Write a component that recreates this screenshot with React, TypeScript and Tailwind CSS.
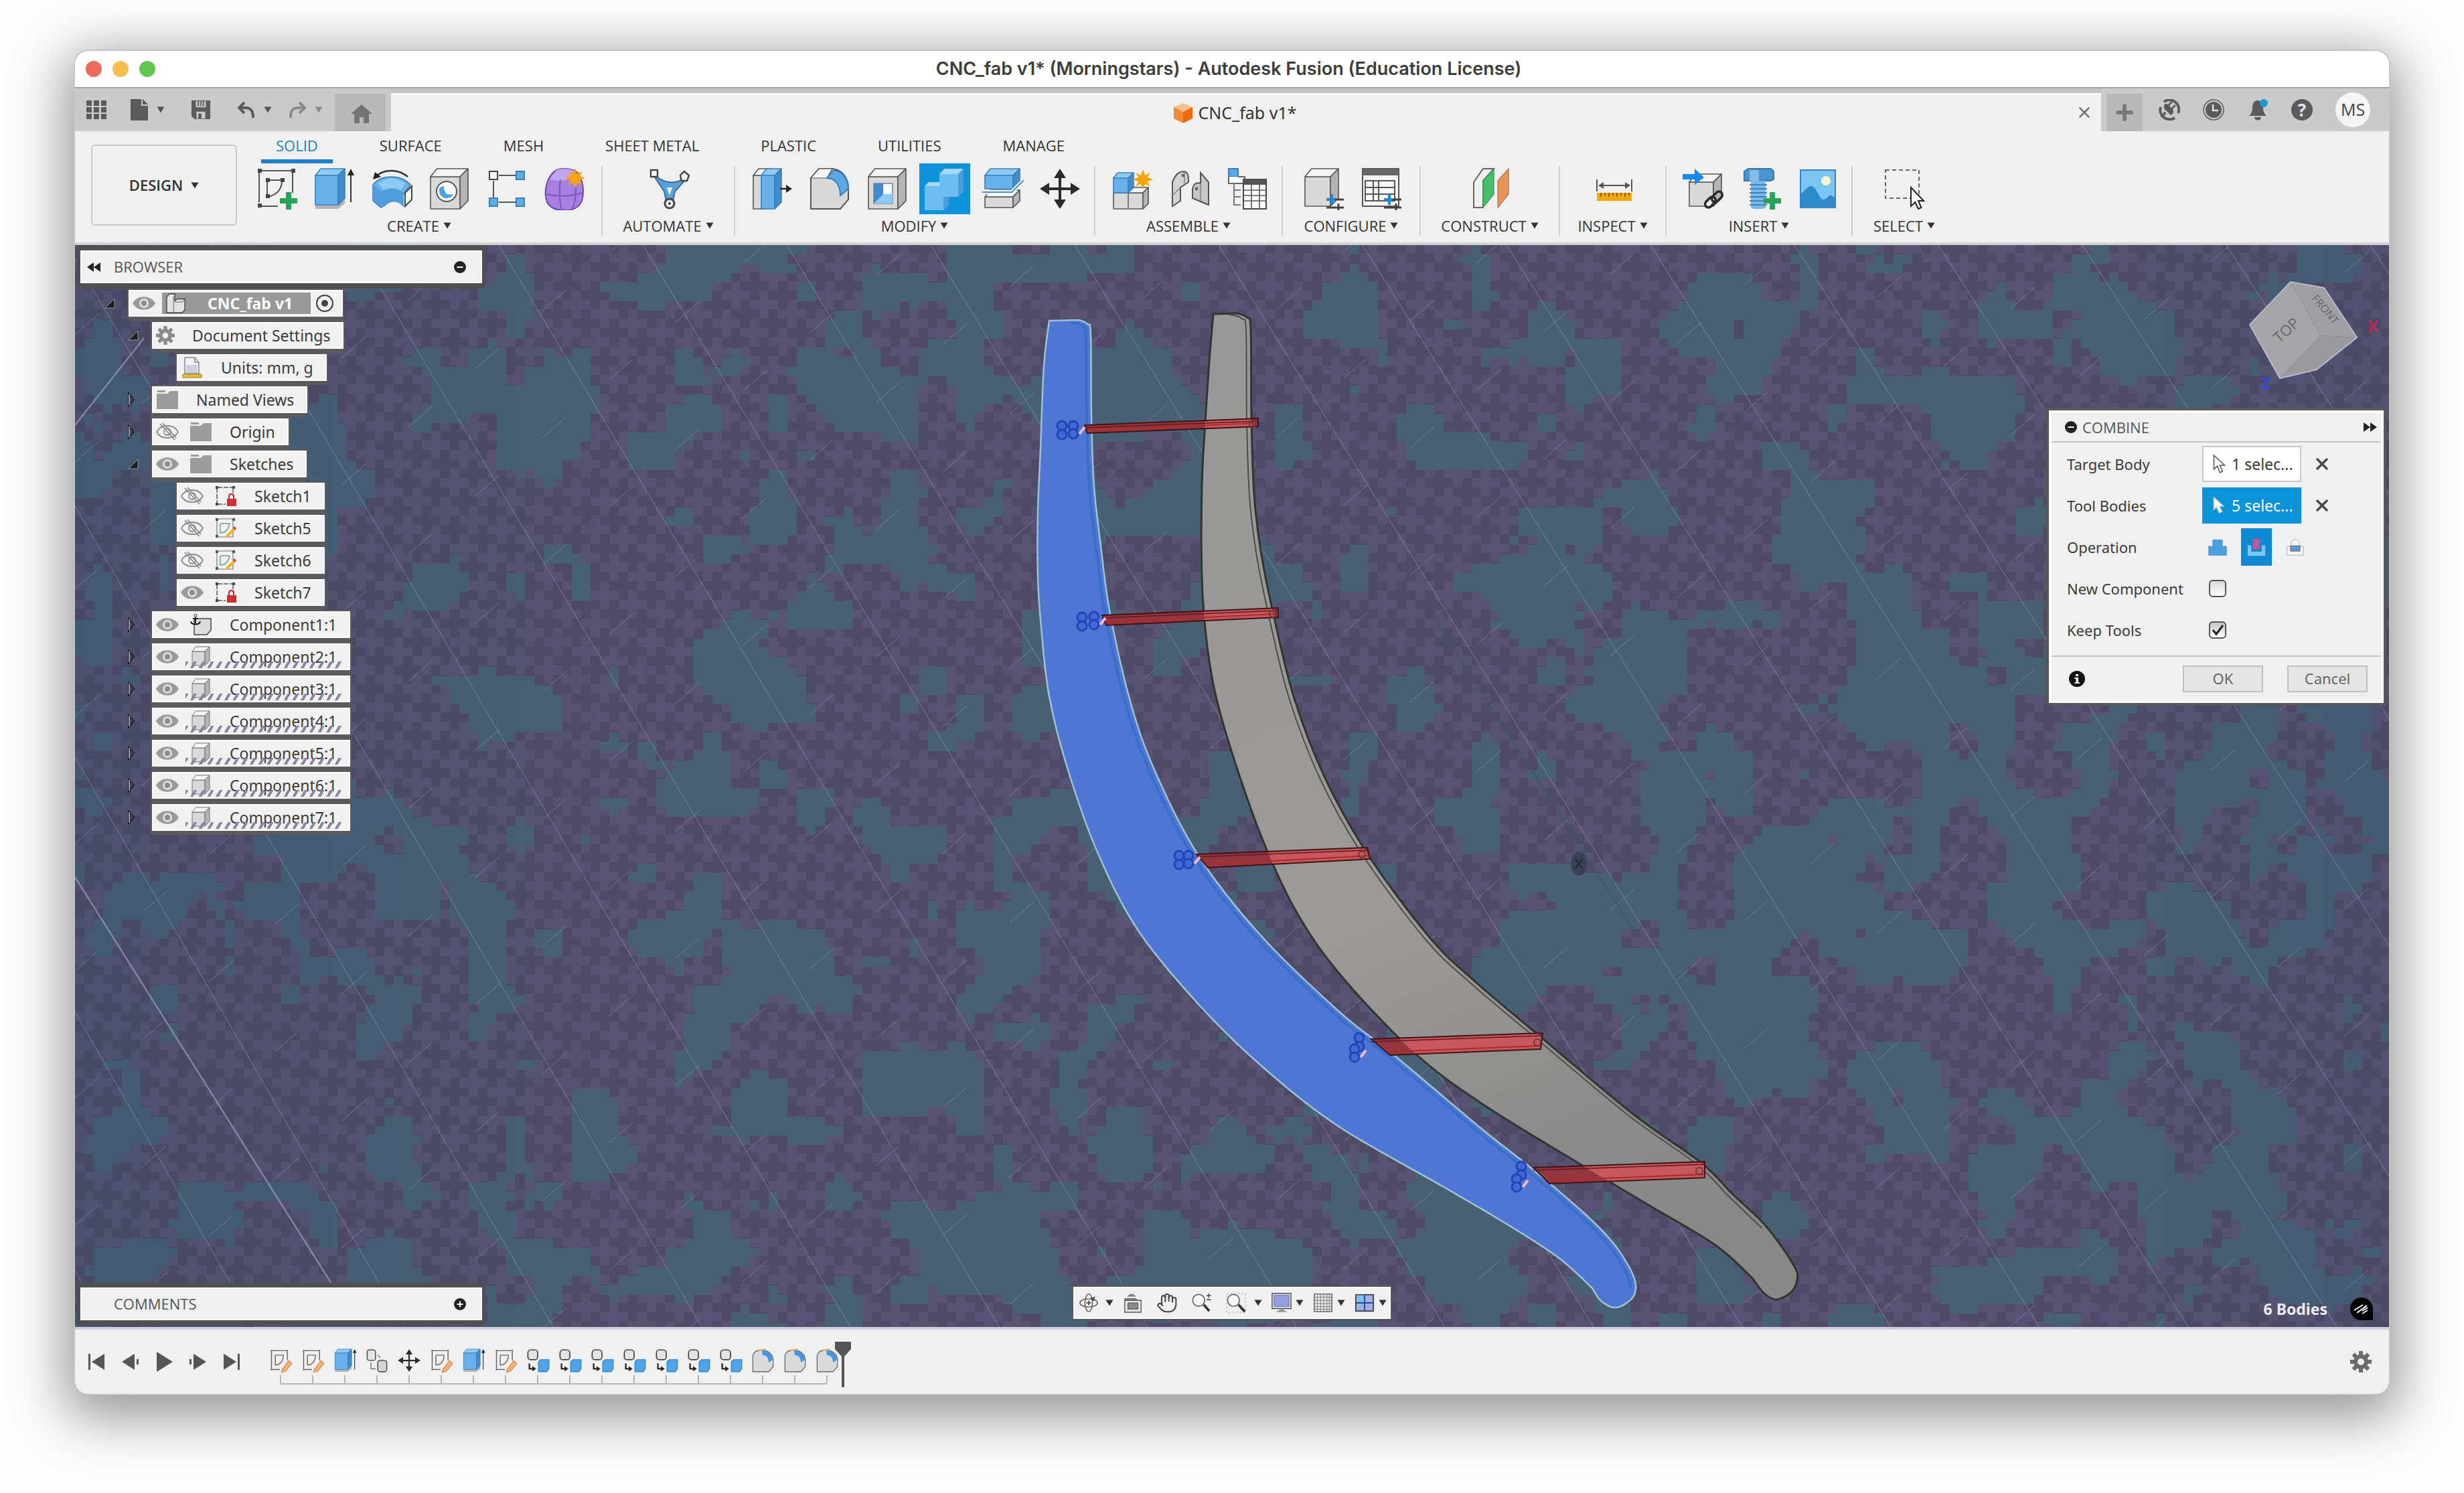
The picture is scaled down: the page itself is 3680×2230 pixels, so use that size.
import { useId } from "react";
import type { ReactNode } from "react";
import { Plus, X, Hand } from "lucide-react";

type Point = [number, number];

/* ---------- shared bits ---------- */

function Caret({ className = "text-[#333]" }: { className?: string }) {
  return (
    <svg viewBox="0 0 12 10" className={`h-[10px] w-3 shrink-0 ${className}`} aria-hidden="true">
      <path d="M0.5 0.5h11L6 9.5z" fill="currentColor" />
    </svg>
  );
}

function Glyph({ children, className = "h-16 w-16" }: { children: ReactNode; className?: string }) {
  return (
    <svg viewBox="0 0 32 32" className={`shrink-0 ${className}`} fill="none" aria-hidden="true">
      {children}
    </svg>
  );
}

type Tone = "blue" | "grey";

// block with a chamfered right side, the base of most modelling icons
function Block({ x = 2, y = 1, w = 28, h = 30, d = 6, tone = "grey" as Tone }) {
  const blue = tone === "blue";
  const line = blue ? "#3b7fbd" : "#555";
  return (
    <g stroke={line} strokeWidth={0.8} strokeLinejoin="round">
      <path d={`M${x} ${y + d}h${w - d}v${h - d}h-${w - d}z`} fill={blue ? "#67b0ea" : "#d9d9d9"} />
      <path d={`M${x} ${y + d}l${d * 0.8} -${d}h${w - d * 0.8}l-${d} ${d}z`} fill={blue ? "#8fcaf5" : "#f4f4f4"} />
      <path d={`M${x + w - d} ${y + d}l${d} -${d}v${h - d}l-${d} ${d}z`} fill={blue ? "#3f8bcb" : "#b4b4b4"} />
    </g>
  );
}

function Star({ x, y }: { x: number; y: number }) {
  return (
    <path
      transform={`translate(${x} ${y})`}
      d="M0-7.5 1.6-3 5.4-5 3.4-1.5 7.5 0 3.4 1.6 5.4 5.2 1.6 3.4 0 7.5-1.6 3.4-5.4 5.2-3.4 1.6-7.5 0-3.4-1.5-5.4-5-1.6-3z"
      fill="#f7a408"
    />
  );
}

function Cross({ x, y }: { x: number; y: number }) {
  return <path d={`M${x} ${y - 6.5}v13M${x - 6.5} ${y}h13`} stroke="#27a35b" strokeWidth={4} />;
}

function MoveArrows() {
  return (
    <g fill="#2b2b2b">
      <path d="M15 7h2v18h-2zM7 15h18v2H7z" />
      <path d="M16 1l4.5 7h-9zM16 31l4.5-7h-9zM1 16l7-4.5v9zM31 16l-7-4.5v9z" />
    </g>
  );
}

/* ---------- ribbon icons ---------- */

const icons: Record<string, ReactNode> = {
  sketch: (
    <Glyph>
      <path d="M4 2.500h23M3 4v22M28 4v15M4 29h13M10 9.500h10M9 11v9M20 10c0 6-3 10-10 12" stroke="#555" />
      <path d="M2 1h3v3H2zM27 1h3v3h-3zM2 27h3v3H2zM8 8h3v3H8zM19 8h3v3h-3zM8 20h3v3H8z" fill="#444" />
      <Cross x={25} y={25} />
    </Glyph>
  ),
  extrude: (
    <Glyph>
      <path d="M2 27h17l5-4v4l-5 4H2z" fill="#b5b5b5" />
      <Block x={2} y={1} w={22} h={27} d={5} tone="blue" />
      <path d="M28.500 26V4" stroke="#333" />
      <path d="M28.500 1l2.500 5h-5z" fill="#222" />
    </Glyph>
  ),
  revolve: (
    <Glyph>
      <path d="M2 13c6-8 21-8 28 0l-5 7c-4-4-12-3-14 6l-3 4-6-5z" fill="#67b0ea" stroke="#3b7fbd" strokeWidth={0.8} />
      <path d="M2 13l7 5c2-2 12-4 16 2v10c-3-5-10-6-14-1l-2 1-7-5z" fill="#4f9edb" />
      <path d="M6 12c6-5 14-5 20 0l-3 5c-4-2-10-2-13 0z" fill="#8fcaf5" />
      <path d="M26 19l5-5v10l-5 5z" fill="#f5f5f5" stroke="#444" />
      <path d="M4 7c6-6 17-6 24 0" stroke="#333" strokeWidth={1.2} />
      <path d="M2 9l1.500-5.500L8 7z" fill="#222" />
    </Glyph>
  ),
  hole: (
    <Glyph>
      <Block />
      <circle cx={14} cy={18} r={7.5} fill="#f8f8f8" stroke="#555" />
      <path d="M9 15a5.500 5.500 0 1 0 10 5c-5 1-7-1-7-6z" fill="#4fa3e3" />
    </Glyph>
  ),
  pattern: (
    <Glyph>
      <path d="M10 6h13M6 10v13M10 26h13" stroke="#555" />
      <path d="M3 3h6v6H3z" fill="#fff" stroke="#444" />
      <path d="M23 3h6v6h-6zM3 23h6v6H3zM23 23h6v6h-6z" fill="#5aaeea" stroke="#3b7fbd" />
    </Glyph>
  ),
  form: (
    <Glyph>
      <path d="M10 2c5-2 12-1 16 2 4 6 5 14 3 21-2 5-6 7-12 7-7 0-11-1-14-6-3-8 0-20 7-24z" fill="#a67fe0" stroke="#6d46b0" />
      <path d="M10 2c5-2 12-1 15 2-3 6-12 7-20 5z" fill="#c3a6ef" />
      <path d="M2 20c8 2 19 2 27-1M13 9c-1 7-1 15 1 23M23 8c2 6 2 16-1 23" stroke="#7d55c4" />
      <Star x={24} y={8} />
    </Glyph>
  ),
  automate: (
    <Glyph>
      <path d="M5 4c2 8 20 10 22 2l2 2-9 10-2 10h-4l-2-10-8-12z" fill="#5a9fd6" stroke="#3c6f9c" />
      <path d="M14 15h4l-2 6z" fill="#f0f0f0" />
      <circle cx={16} cy={27} r={3.5} fill="#eee" stroke="#444" strokeWidth={1.5} />
      <circle cx={16} cy={27} r={1} fill="#444" />
      <path d="M2 2h5v5H2zM27 3l3.500 3-1.500 4h-4l-1-4z" fill="#fff" stroke="#444" strokeWidth={1.2} />
    </Glyph>
  ),
  pressPull: (
    <Glyph>
      <Block x={2} y={1} w={14} h={30} d={5} />
      <Block x={8} y={1} w={15} h={30} d={5} tone="blue" />
      <path d="M22 16h6" stroke="#222" strokeWidth={1.2} />
      <path d="M31 16l-4.500-3v6z" fill="#222" />
    </Glyph>
  ),
  fillet: (
    <Glyph>
      <path d="M2 8l6-7h10c8 1 12 7 12 15v8l-6 7H2z" fill="#d9d9d9" stroke="#555" />
      <path d="M2 8l6-7h10l-4 7z" fill="#f5f5f5" stroke="#555" strokeWidth={0.6} />
      <path d="M14 8l5-6c7 1 11 7 11 14l-6 5c0-8-4-13-10-13z" fill="#5aa9e6" stroke="#3b7fbd" />
    </Glyph>
  ),
  shell: (
    <Glyph>
      <Block />
      <path d="M6 12h14v15H6z" fill="#f5fafd" stroke="#999" />
      <path d="M6 12h7v9l-7 6z" fill="#3f8bcb" />
      <path d="M13 20h7v7H6z" fill="#8fcaf5" />
    </Glyph>
  ),
  combine: (
    <Glyph>
      <path d="M1 14l3-3h8V5l4-4h14v17l-4 4h-7v6l-4 4H1z" fill="#6fbcf3" />
      <path d="M12 5l4-4h14l-4 4zM1 14l3-3h8v3z" fill="#a4d8fb" />
      <path d="M26 5l4-4v17l-4 4zM15 32l4-4v-6h-4z" fill="#479cdc" />
    </Glyph>
  ),
  split: (
    <Glyph>
      <Block x={3} y={17} w={26} h={13} d={5} />
      <Block x={3} y={1} w={26} h={15} d={5} tone="blue" />
      <path d="M1 18.500h22l9-9" stroke="#fff" strokeWidth={3} />
      <path d="M1 18.500h22l9-9" stroke="#3b8fd6" strokeWidth={1} />
    </Glyph>
  ),
  move: (
    <Glyph>
      <MoveArrows />
    </Glyph>
  ),
  newComponent: (
    <Glyph>
      <Block x={2} y={15} w={26} h={16} d={4} />
      <path d="M13 19v12" stroke="#666" strokeWidth={0.8} />
      <Block x={2} y={4} w={15} h={15} d={4} tone="blue" />
      <Star x={24} y={9} />
    </Glyph>
  ),
  joint: (
    <Glyph>
      <path d="M3 11c2-5 4-8 9-8 3 1 3 4 3 8l-6 4v10l-6 4z" fill="#d2d2d2" stroke="#555" />
      <path d="M9 15l-6 6M12 3v9" stroke="#888" strokeWidth={0.8} />
      <path d="M30 28l-12-5v-7c1-4 3-5 6-4V4l6 7z" fill="#c6c6c6" stroke="#555" />
      <path d="M24 12v13" stroke="#888" strokeWidth={0.8} />
      <circle cx={11} cy={6} r={1.2} fill="#666" />
      <circle cx={21} cy={16} r={1.2} fill="#666" />
    </Glyph>
  ),
  bom: (
    <Glyph>
      <path d="M2 1h7v6H2z" fill="#5aa9e6" stroke="#3b7fbd" />
      <path d="M9 7h5v5H2V7" fill="#fff" stroke="#666" />
      <path d="M6 12v16h5M6 17h5M6 22h5" stroke="#777" />
      <path d="M13 9h17v22H13z" fill="#fff" stroke="#444" />
      <path d="M13 9h17v4H13z" fill="#555" />
      <path d="M13 17h17M13 21h17M13 25h17M19 13v18M25 13v18" stroke="#555" strokeWidth={0.8} />
    </Glyph>
  ),
  configure: (
    <Glyph>
      <Block x={2} y={1} w={25} h={28} d={6} />
      <path d="M18 24h13M18 30h13" stroke="#444" strokeWidth={1.5} />
      <path d="M22 20v8M18 24h6" stroke="#1f86d8" strokeWidth={2} />
      <path d="M27 27v5" stroke="#444" strokeWidth={1.5} />
    </Glyph>
  ),
  configTable: (
    <Glyph>
      <path d="M2 1h27v28H2z" fill="#f7f7f7" stroke="#555" />
      <path d="M2 1h27v5H2z" fill="#666" />
      <path d="M4 10h22v15H4zM4 15h22M4 20h22M10 10v15M14 10v15" stroke="#555" />
      <path d="M18 24h13M18 30h13" stroke="#444" strokeWidth={1.5} />
      <path d="M22 20v8M18 24h6" stroke="#1f86d8" strokeWidth={2} />
      <path d="M27 27v5" stroke="#444" strokeWidth={1.5} />
    </Glyph>
  ),
  construct: (
    <Glyph>
      <path d="M3 11l7-10h8l-8 9v20H3z" fill="#efefef" stroke="#666" />
      <path d="M10 10l8-9v19l-8 10z" fill="#45c069" stroke="#2f9a50" strokeWidth={0.6} />
      <path d="M21 10l8-9v19l-8 10z" fill="#e8935a" stroke="#a9714a" strokeWidth={0.6} />
    </Glyph>
  ),
  measure: (
    <Glyph>
      <path d="M3 9v9M29 9v9M5 13.500h22" stroke="#555" />
      <path d="M4 13.500l4-2.500v5zM28 13.500l-4-2.500v5z" fill="#555" />
      <path d="M3 19h26v6H3z" fill="#f4a70d" />
      <path d="M6 19v3M9 19v2M12 19v3M15 19v2M18 19v3M21 19v2M24 19v3M27 19v2" stroke="#6b4a00" strokeWidth={0.8} />
    </Glyph>
  ),
  derive: (
    <Glyph>
      <Block x={6} y={5} w={24} h={24} d={6} />
      <path d="M1 5h9V1l7 6.500L10 13V9H1z" fill="#1489f2" />
      <rect x={17} y={24} width={9} height={5} rx={2.5} transform="rotate(-45 21 26)" stroke="#2b2b2b" strokeWidth={1.8} fill="#eee" />
      <rect x={22} y={20} width={9} height={5} rx={2.5} transform="rotate(-45 26 22)" stroke="#2b2b2b" strokeWidth={1.8} />
    </Glyph>
  ),
  bolt: (
    <Glyph>
      <path d="M4 3l3-2h17l2 2v6l-2 1H4z" fill="#4c95cf" stroke="#3a78ab" />
      <path d="M8 2h7v8H8z" fill="#82bbe6" />
      <path d="M9 10h11v20l-2 1h-7l-2-1z" fill="#79b8e8" />
      <path d="M8 13h13M8 16h13M8 19h13M8 22h13M8 25h13M8 28h13" stroke="#3f82b8" />
      <Cross x={25} y={25} />
    </Glyph>
  ),
  picture: (
    <Glyph>
      <path d="M3 2h26v28H3z" fill="#7cc6f6" stroke="#3b7fbd" />
      <circle cx={22} cy={10} r={3.5} fill="#fff5d0" />
      <path d="M3 20c3-2 5-6 8-6 4 0 6 10 9 10 3 0 4-4 6-3l3 2v7H3z" fill="#2f8ac9" />
    </Glyph>
  ),
  select: (
    <Glyph>
      <path d="M1 2h25v21H1z" stroke="#666" strokeDasharray="3 2" />
      <path d="M20 15v14l3.200-3 2.300 5 2.200-1-2.200-5h4z" fill="#fff" stroke="#222" />
    </Glyph>
  ),
};

const ribbonGroups = [
  { label: "CREATE", width: "w-[546px]", tools: ["sketch", "extrude", "revolve", "hole", "pattern", "form"] },
  { label: "AUTOMATE", width: "w-[198px]", tools: ["automate"] },
  { label: "MODIFY", width: "w-[538px]", tools: ["pressPull", "fillet", "shell", "combine", "split", "move"] },
  { label: "ASSEMBLE", width: "w-[280px]", tools: ["newComponent", "joint", "bom"] },
  { label: "CONFIGURE", width: "w-[206px]", tools: ["configure", "configTable"] },
  { label: "CONSTRUCT", width: "w-[208px]", tools: ["construct"] },
  { label: "INSPECT", width: "w-[159px]", tools: ["measure"] },
  { label: "INSERT", width: "w-[278px]", tools: ["derive", "bolt", "picture"] },
  { label: "SELECT", width: "w-[154px]", tools: ["select"] },
];

const ribbonTabs = ["SOLID", "SURFACE", "MESH", "SHEET METAL", "PLASTIC", "UTILITIES", "MANAGE"];

/* ---------- window chrome ---------- */

function TitleBar() {
  return (
    <header className="flex h-14 shrink-0 items-center border-b-2 border-[#a5a5a5] bg-white px-4">
      <div className="flex gap-4">
        <button aria-label="Close" className="h-6 w-6 rounded-full bg-[#ed6a5f]" />
        <button aria-label="Minimize" className="h-6 w-6 rounded-full bg-[#f5bf4f]" />
        <button aria-label="Zoom" className="h-6 w-6 rounded-full bg-[#61c554]" />
      </div>
      <h1 className="flex-1 pr-[114px] text-center font-['Inter',sans-serif] text-[27px] font-semibold text-[#3d3d3d]">
        CNC_fab v1* (Morningstars) - Autodesk Fusion (Education License)
      </h1>
    </header>
  );
}

function DocumentBar() {
  return (
    <div className="flex h-16 shrink-0 bg-[#cacaca] text-[#5b5b5b]">
      <div className="flex w-[388px] items-center pl-4">
        <button aria-label="Data panel" className="w-[66px]">
          <svg viewBox="0 0 32 32" className="h-8 w-8" fill="currentColor" aria-hidden="true">
            <path d="M1 2h8v8H1zM12 2h8v8h-8zM23 2h8v8h-8zM1 12h8v8H1zM12 12h8v8h-8zM23 12h8v8h-8zM1 22h8v8H1zM12 22h8v8h-8zM23 22h8v8h-8z" />
          </svg>
        </button>
        <button aria-label="File" className="flex w-[82px] items-center gap-3">
          <svg viewBox="0 0 28 34" className="h-[34px] w-7" fill="currentColor" aria-hidden="true">
            <path d="M1 1h16v10h10v22H1zM19 1l8 8h-8z" />
          </svg>
          <Caret className="text-[#555]" />
        </button>
        <button aria-label="Save" className="w-[74px] pl-[9px]">
          <svg viewBox="0 0 32 32" className="h-8 w-[30px]" aria-hidden="true">
            <path d="M1 1h30v30H6l-5-5z" fill="#5b5b5b" />
            <path d="M8 2h16v10H8zM9 19h14v11H9z" fill="#cacaca" />
            <path d="M11 2h2v8h-2zM15 2h2v8h-2zM19 2h2v8h-2zM12 22h5v8h-5z" fill="#5b5b5b" />
          </svg>
        </button>
        <button aria-label="Undo" className="flex w-[78px] items-center gap-3 pl-1">
          <svg viewBox="0 0 28 26" className="h-[26px] w-7" fill="none" stroke="currentColor" strokeWidth={4} aria-hidden="true">
            <path d="M11 2L3 10l8 8M4 10h9c8 0 11 5 11 15" />
          </svg>
          <Caret className="text-[#555]" />
        </button>
        <button aria-label="Redo" className="flex items-center gap-3 pl-0.5 text-[#8a8a8a]">
          <svg viewBox="0 0 28 26" className="h-[26px] w-7" fill="none" stroke="currentColor" strokeWidth={4} aria-hidden="true">
            <path d="M17 2l8 8-8 8M24 10h-9C7 10 4 15 4 25" />
          </svg>
          <Caret className="text-[#8a8a8a]" />
        </button>
      </div>
      <div className="flex w-[84px] pr-2 pt-2">
        <button aria-label="Home" className="flex flex-1 items-center justify-center bg-[#b9b9b9] pl-1 text-[#737373]">
          <svg viewBox="0 0 32 28" className="mt-1 h-7 w-8" fill="currentColor" aria-hidden="true">
            <path d="M16 0l16 14h-5v14h-8v-9h-6v9H5V14H0z" />
          </svg>
        </button>
      </div>
      <div className="flex flex-1 items-center bg-[#f0f0f0] shadow-[inset_0_7px_0_#c4c4c4,inset_0_10px_0_#fafafa]">
        <div className="flex flex-1 items-center justify-center gap-2 pt-2.5 pl-1">
          <svg viewBox="0 0 30 32" className="h-8 w-[30px]" aria-hidden="true">
            <path d="M15 1l14 6-14 7L1 7z" fill="#f9c08e" />
            <path d="M1 7l14 7v17L1 24z" fill="#f58a35" />
            <path d="M29 7l-14 7v17l14-7z" fill="#ee6a0c" />
          </svg>
          <span className="font-['Noto_Sans',sans-serif] text-[25px] text-[#333]">CNC_fab v1*</span>
        </div>
        <button aria-label="Close document" className="mr-3 pt-2 text-[#777]">
          <X size={26} strokeWidth={2.5} />
        </button>
      </div>
      <div className="flex items-center">
        <button aria-label="New document" className="ml-2 mt-2 flex h-14 w-[54px] items-center justify-center bg-[#b9b9b9] text-[#777]">
          <Plus size={34} strokeWidth={4} />
        </button>
        <button aria-label="Extensions" className="ml-6">
          <svg viewBox="0 0 32 32" className="h-8 w-8" fill="none" aria-hidden="true">
            <path d="M8 4a14 14 0 0 1 21 17M24 28A14 14 0 0 1 3 12" stroke="#5b5b5b" strokeWidth={4} />
            <path d="M8 14l10 10c4-2 5-6 3-9l5-5-2-2-5 5-3-3 5-5-2-2-5 5c-3-2-5-1-6 1z" fill="#5b5b5b" />
            <path d="M10 20l-6 7" stroke="#5b5b5b" strokeWidth={4} />
          </svg>
        </button>
        <button aria-label="Job status" className="ml-[34px]">
          <svg viewBox="0 0 32 32" className="h-8 w-8" fill="none" aria-hidden="true">
            <circle cx={16} cy={16} r={15} stroke="#5b5b5b" strokeWidth={1.5} />
            <circle cx={16} cy={16} r={12} fill="#5b5b5b" />
            <path d="M15 8v9h8" stroke="#e0e0e0" strokeWidth={2.5} />
          </svg>
        </button>
        <button aria-label="Notifications" className="ml-[34px]">
          <svg viewBox="0 0 32 36" className="h-9 w-8" aria-hidden="true">
            <path d="M16 4c6 0 8 5 8 11 0 6 2 9 5 12H3c3-3 5-6 5-12 0-6 2-11 8-11zM11 29h10c0 6-10 6-10 0z" fill="#5b5b5b" />
            <circle cx={25} cy={8} r={6} fill="#1c9ad6" />
          </svg>
        </button>
        <button
          aria-label="Help"
          className="ml-[34px] flex h-8 w-8 items-center justify-center rounded-full bg-[#5b5b5b] font-['Open_Sans',sans-serif] text-[26px] font-bold leading-8 text-[#e4e4e4]"
        >
          ?
        </button>
        <button className="ml-[34px] mr-7 flex h-[52px] w-[52px] items-center justify-center rounded-full bg-[#f5f5f5] font-['Open_Sans',sans-serif] text-[25px] text-[#444]">
          MS
        </button>
      </div>
    </div>
  );
}

function Ribbon() {
  return (
    <div className="flex h-[170px] shrink-0 border-b-4 border-[#d4d4d4] bg-[#f0f0f0] font-['Open_Sans',sans-serif] text-[22px] text-[#333]">
      <button className="ml-6 mt-5 flex h-[121px] w-[218px] shrink-0 items-center justify-center gap-3 rounded-md border-2 border-[#c9c9c9] font-semibold">
        DESIGN
        <Caret />
      </button>
      <div className="flex flex-col">
        <nav className="flex h-12 gap-12 pl-9">
          {ribbonTabs.map((tab) => (
            <button
              key={tab}
              className={
                tab === "SOLID"
                  ? "border-b-[6px] border-[#1c80c8] px-[22px] text-[#1f7fb8]"
                  : "border-b-[6px] border-transparent px-[22px]"
              }
            >
              {tab}
            </button>
          ))}
        </nav>
        <div className="mt-1 flex h-[104px]">
          {ribbonGroups.map((group) => (
            <div
              key={group.label}
              className={`flex flex-col items-center border-r-2 border-[#d0d0d0] pt-0.5 last:border-r-0 ${group.width}`}
            >
              <div className="flex h-16 gap-[22px] pl-1">
                {group.tools.map((tool) => (
                  <button
                    key={tool}
                    aria-label={tool}
                    className={tool === "combine" ? "bg-[#0f93d8] ring-6 ring-[#0f93d8]" : ""}
                  >
                    {icons[tool]}
                  </button>
                ))}
              </div>
              <button className="mt-2 flex items-center gap-1.5 leading-[30px]">
                {group.label}
                <Caret />
              </button>
            </div>
          ))}
        </div>
      </div>
    </div>
  );
}

/* ---------- model view ---------- */

// Catmull-Rom through the points, written as cubic segments
function curve(points: Point[]) {
  let d = "";
  for (let i = 0; i < points.length - 1; i++) {
    const a = points[Math.max(i - 1, 0)];
    const b = points[i];
    const c = points[i + 1];
    const e = points[Math.min(i + 2, points.length - 1)];
    d += `C${b[0] + (c[0] - a[0]) / 6} ${b[1] + (c[1] - a[1]) / 6} ${c[0] - (e[0] - b[0]) / 6} ${c[1] - (e[1] - b[1]) / 6} ${c[0]} ${c[1]}`;
  }
  return d;
}

const blueRight: Point[] = [
  [1612, 478], [1624, 484], [1629, 500], [1630, 624], [1634, 727], [1645, 823], [1657, 911], [1686, 1040],
  [1722, 1145], [1788, 1275], [1880, 1394], [2000, 1511], [2082, 1576], [2214, 1687], [2286, 1744], [2367, 1813],
  [2408, 1855], [2434, 1894], [2443, 1920], [2437, 1940], [2413, 1953], [2391, 1943], [2378, 1924],
];
const blueLeft: Point[] = [
  [2378, 1924], [2327, 1878], [2245, 1825], [2153, 1771], [2000, 1683], [1885, 1593], [1790, 1500], [1700, 1390],
  [1640, 1275], [1595, 1150], [1567, 1040], [1555, 937], [1550, 861], [1550, 765], [1554, 670], [1559, 547], [1567, 479],
];
const greyRight: Point[] = [
  [1848, 468], [1862, 474], [1868, 492], [1869, 624], [1873, 738], [1883, 823], [1902, 918], [1932, 1040],
  [1978, 1160], [2042, 1275], [2135, 1400], [2204, 1467], [2306, 1553], [2439, 1664], [2541, 1737], [2587, 1783],
  [2638, 1832], [2679, 1890], [2684, 1911], [2675, 1930], [2653, 1941], [2635, 1932], [2617, 1909],
];
const greyLeft: Point[] = [
  [2617, 1909], [2561, 1859], [2459, 1798], [2357, 1737], [2214, 1649], [2112, 1572], [2000, 1454], [1935, 1360],
  [1886, 1255], [1845, 1140], [1816, 1040], [1802, 957], [1795, 861], [1795, 727], [1800, 631], [1806, 540], [1812, 469],
];

const bluePath = `M1567 479L1612 478${curve(blueRight)}${curve(blueLeft)}Z`;
const greyPath = `M1812 469L1848 468${curve(greyRight)}${curve(greyLeft)}Z`;

const rods: { body: Point[]; pin: Point[] }[] = [
  { body: [[1620, 635], [1879, 625], [1879, 637], [1624, 647]], pin: [[1590, 642], [1606, 642]] },
  { body: [[1646, 919], [1909, 908], [1909, 922], [1652, 934]], pin: [[1620, 928], [1637, 927]] },
  { body: [[1787, 1276], [2042, 1266], [2046, 1283], [1804, 1296]], pin: [[1765, 1284], [1778, 1284]] },
  { body: [[2048, 1552], [2304, 1543], [2301, 1567], [2076, 1576]], pin: [[2034, 1556], [2026, 1573]] },
  { body: [[2290, 1744], [2546, 1735], [2546, 1759], [2314, 1768]], pin: [[2276, 1748], [2268, 1767]] },
];

const poly = (points: Point[]) => points.map((p) => p.join(",")).join(" ");

function hash(x: number, y: number) {
  const n = Math.sin(x * 127.1 + y * 311.7) * 43758.5453;
  return n - Math.floor(n);
}

function noise(x: number, y: number) {
  const xi = Math.floor(x);
  const yi = Math.floor(y);
  const u = (x - xi) * (x - xi) * (3 - 2 * (x - xi));
  const v = (y - yi) * (y - yi) * (3 - 2 * (y - yi));
  const top = hash(xi, yi) * (1 - u) + hash(xi + 1, yi) * u;
  const low = hash(xi, yi + 1) * (1 - u) + hash(xi + 1, yi + 1) * u;
  return top * (1 - v) + low * v;
}

// x, y, radius of the open patches in the ground plane
const patches = [
  [1033, 1173, 95], [1120, 1010, 90], [1385, 1620, 100], [1455, 1855, 110], [2018, 425, 110], [1700, 590, 80],
  [2300, 830, 110], [2558, 490, 100], [2350, 1370, 110], [2640, 1320, 90], [3030, 1270, 110], [2820, 1060, 80],
  [3120, 1130, 70], [2160, 1860, 110], [2605, 1550, 90], [2790, 1620, 90], [3290, 1410, 70], [1314, 780, 80],
  [1010, 430, 80], [830, 610, 70], [1500, 1400, 90], [1830, 860, 70], [2112, 610, 90], [2720, 780, 80],
  [2930, 620, 90], [2440, 1060, 70], [3400, 1880, 60], [1210, 1230, 70], [900, 1700, 80], [700, 1350, 60],
  [3180, 500, 70], [2980, 1780, 70], [620, 900, 60], [1900, 1900, 60], [1740, 730, 60], [2500, 1180, 60],
  [1640, 1700, 70], [1250, 560, 60], [1180, 1420, 60], [2380, 520, 60], [2820, 1420, 60],
];

function groundPath() {
  const step = 14;
  let d = "";
  for (let y = 366; y < 1990; y += step) {
    let start = -1;
    for (let x = 112; x <= 3584; x += step) {
      let value = noise(x / 95, y / 95) * 0.44 + noise(x / 48 + 40, y / 48) * 0.48 + noise(x / 16, y / 16) * 0.08;
      for (const [px, py, r] of patches) {
        const dist = Math.hypot(x - px, y - py) / r;
        if (dist < 1.2) value += (1.2 - dist) * 0.32;
      }
      const open = value > 0.6 && x < 3570;
      if (open && start < 0) start = x;
      if (!open && start >= 0) {
        d += `M${start} ${y}H${x}v${step}H${start}z`;
        start = -1;
      }
    }
  }
  return d;
}

const ground = groundPath();

const checks = Array.from({ length: 100 }, (_, n) => [n % 10, Math.floor(n / 10)]).filter(([i, j]) =>
  [0, 1, 3, 7, 9].includes((i + 7 * j) % 10),
);

function ModelView() {
  const id = useId();
  return (
    <svg
      viewBox="112 366 3456 1616"
      preserveAspectRatio="xMidYMid slice"
      className="absolute inset-0 h-full w-full"
      role="img"
      aria-label="Model view"
    >
      <defs>
        <pattern id={`${id}c`} width={140} height={140} patternUnits="userSpaceOnUse">
          <rect width={140} height={140} fill="#595373" />
          {checks.map(([i, j]) => (
            <rect key={`${i}-${j}`} x={i * 14} y={j * 14} width={14} height={14} fill="#4f4a67" />
          ))}
        </pattern>
        <linearGradient id={`${id}e`}>
          <stop offset="0" stopColor="#2c4560" stopOpacity={0.22} />
          <stop offset="0.25" stopColor="#2c4560" stopOpacity={0} />
          <stop offset="0.85" stopColor="#2c4560" stopOpacity={0} />
          <stop offset="1" stopColor="#2c4560" stopOpacity={0.15} />
        </linearGradient>
        <linearGradient id={`${id}f`} gradientUnits="userSpaceOnUse" x1={1800} y1={470} x2={2400} y2={1900}>
          <stop offset="0" stopColor="#989898" />
          <stop offset="0.6" stopColor="#9b9a98" />
          <stop offset="0.85" stopColor="#8c8c8c" />
          <stop offset="1" stopColor="#888" />
        </linearGradient>
        <clipPath id={`${id}g`}>
          <path d={greyPath} />
        </clipPath>
      </defs>
      <rect x={112} y={366} width={3456} height={1616} fill={`url(#${id}c)`} />
      <path d={ground} fill="#486074" />
      <rect x={112} y={366} width={3456} height={1616} fill={`url(#${id}e)`} />

      <g stroke="#a9a5c8" fill="none">
        {Array.from({ length: 21 }, (_, i) => (
          <line key={i} x1={-760 + i * 215} y1={366} x2={160 + i * 222} y2={1982} strokeWidth={1.5} strokeOpacity={0.32} />
        ))}
        {Array.from({ length: 29 }, (_, i) => (
          <line key={i} x1={112} y1={500 + i * 190} x2={3568} y2={-2500 + i * 190} strokeWidth={1.5} strokeOpacity={0.25} strokeDasharray="48 84" />
        ))}
        <path d="M112 1310L500 1925M112 635L215 505" strokeWidth={2.5} strokeOpacity={0.6} />
      </g>
      <path d="M2140 920L2440 1390" stroke="#2f5a66" strokeWidth={3} strokeOpacity={0.5} />
      <ellipse cx={2358} cy={1290} rx={12} ry={18} fill="#3b4257" />
      <path d="M2352 1282l12 16M2364 1282l-12 16" stroke="#20252f" strokeWidth={2} />

      <path d={greyPath} fill={`url(#${id}f)`} stroke="#333430" strokeWidth={3} strokeLinejoin="round" />
      <path
        d={`M1842 468${curve(greyRight.slice(0, 17))}`}
        transform="translate(-7 2)"
        stroke="#4d4d4a"
        strokeWidth={2}
        fill="none"
      />

      <path d={bluePath} fill="#4f76d4" stroke="#9cc3cf" strokeWidth={2.5} strokeLinejoin="round" />
      <path
        d={`M1606 479${curve(blueRight.slice(0, 19))}`}
        transform="translate(-7 3)"
        stroke="#2f6fc4"
        strokeWidth={4}
        strokeOpacity={0.8}
        fill="none"
      />

      {rods.map(({ body }, i) => (
        <g key={i}>
          <polygon points={poly(body)} fill="#943640" />
          <polygon points={poly(body)} fill="#c7585d" clipPath={`url(#${id}g)`} />
          <line x1={body[0][0]} y1={body[0][1] + 4} x2={body[1][0]} y2={body[1][1] + 4} stroke="#5e1a20" strokeWidth={1.5} />
          <line x1={body[3][0]} y1={body[3][1] - 5} x2={body[2][0]} y2={body[2][1] - 5} stroke="#b02a2a" strokeWidth={2} />
          <polygon points={poly(body)} fill="none" stroke="#401317" strokeWidth={2} />
          <circle cx={body[1][0] - 8} cy={(body[1][1] + body[2][1]) / 2 + 2} r={5} fill="none" stroke="#6b3a40" strokeWidth={2} />
        </g>
      ))}

      {rods.map(({ pin: [a, b] }, i) => (
        <g key={i} fill="#4268d8" stroke="#2346b6" strokeWidth={3}>
          <circle cx={a[0] - 4} cy={a[1] - 6} r={7} />
          <circle cx={a[0] - 4} cy={a[1] + 7} r={7} />
          <circle cx={b[0] - 3} cy={b[1] - 6} r={7} />
          <circle cx={b[0] - 3} cy={b[1] + 6} r={7} />
          <path d={`M${b[0] + 14} ${b[1] - 4}L${b[0] + 6} ${b[1] + 6}`} stroke="#f3b6cf" strokeWidth={4} />
        </g>
      ))}

      {/* view cube */}
      <g>
        <polygon points="3360,485 3421,421 3466,501 3405,565" fill="#a5a4a6" />
        <polygon points="3421,421 3471,430 3520,504 3466,501" fill="#a09fa4" />
        <polygon points="3466,501 3520,504 3460,552 3405,565" fill="#9a999d" />
        <path d="M3360 485L3421 421 3471 430 3520 504 3460 552 3405 565z" stroke="#b9b8d0" strokeWidth={2} fill="none" />
        <g fontFamily="Open Sans, sans-serif" fill="#66656a">
          <text x={3404} y={513} fontSize={22} transform="rotate(-42 3404 513)">TOP</text>
          <text x={3452} y={446} fontSize={16} transform="rotate(50 3452 446)">FRONT</text>
        </g>
        <g fontFamily="Open Sans, sans-serif" fontWeight={700} fontSize={24}>
          <text x={3536} y={496} fill="#c0264d">X</text>
          <text x={3377} y={581} fill="#3346e0">Z</text>
        </g>
      </g>
    </svg>
  );
}

/* ---------- browser tree ---------- */

function Eye({ off = false }: { off?: boolean }) {
  return (
    <svg viewBox="0 0 34 28" className="h-7 w-[34px] shrink-0" fill="none" aria-hidden="true">
      {off ? (
        <g stroke="#8a8a8a" strokeWidth={1.8}>
          <path d="M1 14C7 2 27 2 33 14 27 26 7 26 1 14z" />
          <circle cx={17} cy={14} r={5} />
          <path d="M6 2l22 24M10 1l20 22" />
        </g>
      ) : (
        <>
          <path d="M0 14C7 1 27 1 34 14 27 27 7 27 0 14z" fill="#9a9a9a" />
          <circle cx={17} cy={14} r={7} fill="#dedede" />
          <circle cx={17} cy={14} r={4} fill="#8c8c8c" />
        </>
      )}
    </svg>
  );
}

function Gear({ className }: { className: string }) {
  return (
    <svg viewBox="0 0 32 32" className={`shrink-0 ${className}`} aria-hidden="true">
      <g fill="currentColor">
        {[0, 45, 90, 135].map((a) => (
          <rect key={a} x={13} y={0} width={6} height={32} transform={`rotate(${a} 16 16)`} />
        ))}
        <circle cx={16} cy={16} r={11} />
      </g>
      <circle cx={16} cy={16} r={5} fill="#f0f0f0" />
    </svg>
  );
}

const small = "h-8 w-[34px]";

const nodeIcons: Record<string, ReactNode> = {
  settings: <Gear className="h-7 w-7 text-[#8a8a8a]" />,
  units: (
    <Glyph className={small}>
      <path d="M5 1h15l6 7v17H5z" fill="#f2f2f2" stroke="#555" />
      <path d="M20 1v7h6" stroke="#555" />
      <path d="M7 12h17v12H7z" fill="#cfcfdf" />
      <path d="M2 26h28v5H2z" fill="#e3bd35" stroke="#a88416" />
    </Glyph>
  ),
  folder: (
    <Glyph className={small}>
      <path d="M0 7h16l4-4h12v27H0z" fill="#9c9c9c" />
      <path d="M1 2h12v3H1z" fill="#9c9c9c" />
    </Glyph>
  ),
  locked: (
    <Glyph className={small}>
      <path d="M4 3h23M3 4v24M27 4v12M4 28h12" stroke="#555" strokeDasharray="7 2" strokeWidth={1.5} />
      <path d="M1 1h4v4H1zM26 1h4v4h-4zM1 26h4v4H1z" fill="#444" />
      <path d="M21 21v-5c0-4 7-4 7 0v5" stroke="#c02a2a" strokeWidth={2} />
      <path d="M18 20h14v11H18z" fill="#cf2f2f" />
    </Glyph>
  ),
  sketch: (
    <Glyph className={small}>
      <path d="M3 2h24v27H3z" stroke="#777" strokeWidth={1.2} />
      <path d="M1 1h4v4H1zM26 1h4v4h-4zM1 26h4v4H1z" fill="#555" />
      <path d="M8 9h14M8 9v14c7 0 12-5 14-14" stroke="#6fa08c" strokeWidth={1.5} />
      <path d="M17 26l10-10 3 3-10 10-4 1z" fill="#f0b429" />
      <path d="M27 16l2-3 3 3-2 3z" fill="#d23a2a" />
    </Glyph>
  ),
  grounded: (
    <Glyph className={small}>
      <path d="M6 7h25v17l-6 7H6z" fill="#dcdcdc" stroke="#444" strokeWidth={1.5} />
      <path d="M8 3v13M4 7h8M1 11c1 6 13 6 14 0" stroke="#222" strokeWidth={2} />
      <circle cx={8} cy={2.5} r={2} fill="#fff" stroke="#222" />
    </Glyph>
  ),
  component: (
    <Glyph className={small}>
      <Block x={3} y={1} w={26} h={28} d={7} />
    </Glyph>
  ),
};

type TreeNode = {
  name: string;
  icon: string;
  depth: 1 | 2;
  eye?: "on" | "off";
  arrow?: "open" | "closed";
  dashed?: boolean;
};

const nodes: TreeNode[] = [
  { name: "Document Settings", icon: "settings", depth: 1, arrow: "open" },
  { name: "Units: mm, g", icon: "units", depth: 2 },
  { name: "Named Views", icon: "folder", depth: 1, arrow: "closed" },
  { name: "Origin", icon: "folder", depth: 1, eye: "off", arrow: "closed" },
  { name: "Sketches", icon: "folder", depth: 1, eye: "on", arrow: "open" },
  { name: "Sketch1", icon: "locked", depth: 2, eye: "off" },
  { name: "Sketch5", icon: "sketch", depth: 2, eye: "off" },
  { name: "Sketch6", icon: "sketch", depth: 2, eye: "off" },
  { name: "Sketch7", icon: "locked", depth: 2, eye: "on" },
  { name: "Component1:1", icon: "grounded", depth: 1, eye: "on", arrow: "closed" },
  { name: "Component2:1", icon: "component", depth: 1, eye: "on", arrow: "closed", dashed: true },
  { name: "Component3:1", icon: "component", depth: 1, eye: "on", arrow: "closed", dashed: true },
  { name: "Component4:1", icon: "component", depth: 1, eye: "on", arrow: "closed", dashed: true },
  { name: "Component5:1", icon: "component", depth: 1, eye: "on", arrow: "closed", dashed: true },
  { name: "Component6:1", icon: "component", depth: 1, eye: "on", arrow: "closed", dashed: true },
  { name: "Component7:1", icon: "component", depth: 1, eye: "on", arrow: "closed", dashed: true },
];

function Arrow({ state }: { state?: "open" | "closed" }) {
  return (
    <span className="flex w-[37px] shrink-0 justify-start">
      {state === "open" && (
        <svg viewBox="0 0 18 18" className="h-[18px] w-[18px]" aria-hidden="true">
          <path d="M16 2v14H2z" fill="#1d1d1d" stroke="#9d9a94" />
        </svg>
      )}
      {state === "closed" && (
        <svg viewBox="0 0 12 22" className="h-[22px] w-3" aria-hidden="true">
          <path d="M2 1v20l8-10z" fill="#45424f" stroke="#1c1a24" strokeWidth={1.5} />
          <path d="M3 3v16" stroke="#b4b1c4" strokeWidth={1.5} />
        </svg>
      )}
    </span>
  );
}

const rowBox =
  "flex h-10 items-center border-2 border-[#fbfbfb] bg-[#f1f1f1] shadow-[0_0_0_2px_#5b5a5f,0_6px_0_#5b5a5f]";

function Tree() {
  return (
    <ul className="mt-2.5 flex flex-col gap-2 font-['Noto_Sans',sans-serif] text-[23px] text-[#3a3a3a]">
      <li className="flex items-center pl-[35px]">
        <Arrow state="open" />
        <div className={`${rowBox} pl-1`}>
          <Eye />
          <div className="ml-2.5 flex h-8 w-[222px] items-center bg-[#999] pl-1.5 font-bold text-white">
            <Glyph className="h-[30px] w-[30px]">
              <path d="M1 6l4-5h9v11l4-3h12v17l-4 5H1z" fill="#e3e3e3" stroke="#444" strokeWidth={1.5} />
              <path d="M12 5v25M14 14h12l4-5" stroke="#555" />
            </Glyph>
            <span className="pl-8">CNC_fab v1</span>
          </div>
          <label className="flex pl-2 pr-3">
            <input
              type="radio"
              name="active"
              defaultChecked
              aria-label="Activate CNC_fab v1"
              className="h-[26px] w-[26px] appearance-none rounded-full border-2 border-[#444] bg-[#444] shadow-[inset_0_0_0_6px_#f1f1f1]"
            />
          </label>
        </div>
      </li>
      {nodes.map((node) => (
        <li key={node.name} className={`flex items-center ${node.depth === 1 ? "pl-[70px]" : "pl-[107px]"}`}>
          <Arrow state={node.arrow} />
          <div className={`${rowBox} relative pl-1 pr-[18px]`}>
            {node.eye && (
              <button aria-label={`Toggle ${node.name}`} className="mr-4 flex">
                <Eye off={node.eye === "off"} />
              </button>
            )}
            {nodeIcons[node.icon]}
            <span className="pl-[26px]">{node.name}</span>
            {node.dashed && (
              <span className="absolute bottom-px left-12 right-2 h-2.5 bg-[repeating-linear-gradient(120deg,#8787a3_0_4px,transparent_4px_11px)]" />
            )}
          </div>
        </li>
      ))}
    </ul>
  );
}

function DotIcon({ plus = false }: { plus?: boolean }) {
  return (
    <svg viewBox="0 0 18 18" className="h-[18px] w-[18px]" aria-hidden="true">
      <circle cx={9} cy={9} r={9} fill="#222" />
      <path d={plus ? "M4.500 9h9M9 4.500v9" : "M4.500 9h9"} stroke="#fff" strokeWidth={2} />
    </svg>
  );
}

const bar =
  "flex h-[49px] w-[600px] items-center border-2 border-[#fbfbfb] bg-[#f0f0f0] font-['Open_Sans',sans-serif] text-[22px] text-[#555] shadow-[0_-2px_0_5px_#505052,0_4px_0_4px_#505052]";

/* ---------- combine dialog ---------- */

function Pointer({ light = false }: { light?: boolean }) {
  return (
    <svg viewBox="0 0 20 30" className="h-[30px] w-5 shrink-0" aria-hidden="true">
      <path
        d={light ? "M1.500 3v18l4-4 4 9 4-2-4-8h6z" : "M1.500 2v21l5-5 4 10 4-2-4-9h7z"}
        fill={light ? "#fff" : "#fafafa"}
        stroke={light ? "#cfd8e0" : "#555"}
        strokeWidth={1.5}
      />
    </svg>
  );
}

const selections = [
  { label: "Target Body", text: "1 selec...", active: false },
  { label: "Tool Bodies", text: "5 selec...", active: true },
];

const operations = [
  { name: "Join", icon: <path d="M1 15h7V4h16v11h7v15H1z" fill="#4aa0e0" stroke="#2f86c6" /> },
  {
    name: "Cut",
    icon: (
      <>
        <path d="M1 13h6v11h18V13h6v18H1z" fill="#7cc8f5" />
        <path d="M10 2h12v18H10z" fill="#b0609e" stroke="#8f4f8f" />
      </>
    ),
  },
  {
    name: "Intersect",
    icon: (
      <>
        <path d="M2 15h28v15H2zM8 15c0-16 16-16 16 0" fill="#f4f4f4" stroke="#b5a8a8" />
        <path d="M8 14h16v9H8z" fill="#5f9bd0" stroke="#555" />
      </>
    ),
  },
];

function CombineDialog() {
  return (
    <section className="w-[500px] border-4 border-[#fbfbfb] bg-[#f0f0f0] font-['Noto_Sans',sans-serif] text-[22px] text-[#3a3a3a] shadow-[0_0_0_4px_#58575c]">
      <header className="flex h-11 items-center border-b-2 border-[#c4c4c4] pl-5 pr-1.5 text-[#555]">
        <DotIcon />
        <h2 className="flex-1 pl-2 font-['Open_Sans',sans-serif]">COMBINE</h2>
        <button aria-label="Dock right">
          <svg viewBox="0 0 20 14" className="h-3.5 w-5" aria-hidden="true">
            <path d="M0 0l10 7-10 7zM10 0l10 7-10 7z" fill="#222" />
          </svg>
        </button>
      </header>
      <div className="grid auto-rows-[62px] grid-cols-[202px_1fr] items-center pt-px pb-[7px] pl-[23px]">
        {selections.map((row) => (
          <div key={row.label} className="col-span-2 grid grid-cols-subgrid items-center">
            <span>{row.label}</span>
            <div className="flex items-center gap-[17px]">
              <button
                className={
                  row.active
                    ? "flex h-[54px] w-[148px] items-center gap-2 bg-[#0a93d8] pl-4 text-[23px] text-white"
                    : "flex h-[54px] w-[148px] items-center gap-2 border-2 border-[#c9c9c9] bg-white pl-3.5 text-[23px]"
                }
              >
                <Pointer light={row.active} />
                {row.text}
              </button>
              <button aria-label={`Clear ${row.label}`} className="text-[#4a4a4a]">
                <X size={28} strokeWidth={3} />
              </button>
            </div>
          </div>
        ))}
        <span>Operation</span>
        <div className="flex items-center gap-3" role="radiogroup" aria-label="Operation">
          {operations.map((op) => (
            <label
              key={op.name}
              className="relative flex h-14 w-[46px] items-center justify-center has-checked:bg-[#0f8ad2]"
            >
              <input type="radio" name="operation" aria-label={op.name} defaultChecked={op.name === "Cut"} className="sr-only" />
              <Glyph className="h-7 w-7">{op.icon}</Glyph>
            </label>
          ))}
        </div>
        <label htmlFor="new-component">New Component</label>
        <input
          id="new-component"
          type="checkbox"
          className="ml-2.5 h-[26px] w-[26px] appearance-none rounded-md border-2 border-[#555] bg-gradient-to-b from-[#dadada] to-white"
        />
        <label htmlFor="keep-tools">Keep Tools</label>
        <span className="relative ml-2.5 h-[26px] w-[26px]">
          <input
            id="keep-tools"
            type="checkbox"
            defaultChecked
            className="peer block h-[26px] w-[26px] appearance-none rounded-md border-2 border-[#555] bg-gradient-to-b from-[#c4c4c4] to-white"
          />
          <svg viewBox="0 0 26 26" className="pointer-events-none absolute inset-0 hidden peer-checked:block" fill="none" aria-hidden="true">
            <path d="M6 13l5 6L21 6" stroke="#222" strokeWidth={3} />
          </svg>
        </span>
      </div>
      <footer className="flex h-[67px] items-center gap-9 border-t-2 border-[#c4c4c4] pl-[26px] pr-5 text-[#666]">
        <svg viewBox="0 0 24 24" className="mr-auto h-6 w-6" aria-label="Info">
          <circle cx={12} cy={12} r={12} fill="#111" />
          <path d="M10 5h4v3h-4zM8.500 10h5.500v7h2v2h-7.500v-2h2v-5h-2z" fill="#fff" />
        </svg>
        <button className="h-10 w-[120px] border-2 border-[#bfbfbf] bg-[#e6e6e6]">OK</button>
        <button className="h-10 w-[120px] border-2 border-[#bfbfbf] bg-[#e6e6e6]">Cancel</button>
      </footer>
    </section>
  );
}

/* ---------- navigation bar ---------- */

const nav = "h-[30px] w-[34px]";

function NavigationBar() {
  return (
    <div className="absolute bottom-3 left-1/2 flex h-12 w-[474px] -translate-x-1/2 items-center border-2 border-white bg-[#f0f0f0] pl-1 shadow-[0_0_0_2px_#57555f]">
      <button aria-label="Orbit" className="flex items-center gap-2">
        <Glyph className={nav}>
          <ellipse cx={16} cy={16} rx={14} ry={6.5} stroke="#555" strokeWidth={1.5} />
          <ellipse cx={16} cy={16} rx={6} ry={14} stroke="#555" strokeWidth={1.5} />
          <path d="M16 12v8M12 16h8M20 9l5-2-1 5z" stroke="#333" strokeWidth={1.5} />
        </Glyph>
        <Caret />
      </button>
      <button aria-label="Look at" className="ml-3">
        <Glyph className={nav}>
          <path d="M3 12h26v19H3z" fill="#e6e6e6" stroke="#555" strokeWidth={1.5} />
          <path d="M8 16h16v10H8z" fill="#888" stroke="#444" />
          <path d="M3 9h16l4 2H3zM8 6c2-5 10-5 12 0" fill="#888" stroke="#666" />
        </Glyph>
      </button>
      <button aria-label="Pan" className="ml-[18px] text-[#444]">
        <Hand size={32} strokeWidth={1.5} />
      </button>
      <button aria-label="Zoom" className="ml-[18px]">
        <Glyph className={nav}>
          <circle cx={12} cy={12} r={9.5} stroke="#666" strokeWidth={1.8} fill="#f8f8f8" />
          <path d="M20 19l9 10" stroke="#333" strokeWidth={4} />
          <path d="M28 1v7M24.500 4.500h7M24.500 11h7" stroke="#444" strokeWidth={1.5} />
        </Glyph>
      </button>
      <button aria-label="Fit" className="ml-[18px] flex items-center gap-2.5">
        <Glyph className={nav}>
          <path d="M1 1h30v30H1z" stroke="#aaa" strokeDasharray="3 3" />
          <circle cx={12} cy={12} r={9.5} stroke="#666" strokeWidth={1.8} fill="#f8f8f8" />
          <path d="M20 19l10 11" stroke="#333" strokeWidth={4} />
        </Glyph>
        <Caret />
      </button>
      <button aria-label="Display settings" className="ml-3 flex items-center gap-1">
        <Glyph className={nav}>
          <path d="M1 1h30v24H1z" fill="#f4f4f4" stroke="#444" strokeWidth={1.5} />
          <path d="M4 4h24v18H4z" fill="#93a0dd" stroke="#5563a5" />
          <path d="M12 26h8v3h4v2H8v-2h4z" fill="#999" />
        </Glyph>
        <Caret />
      </button>
      <button aria-label="Grid and snaps" className="ml-3 flex items-center gap-1">
        <Glyph className={nav}>
          <path d="M2 2h28v28H2z" fill="#e9e9e9" stroke="#555" strokeWidth={1.5} />
          <path d="M2 7h28M2 12h28M2 17h28M2 22h28M2 26h28M7 2v28M12 2v28M17 2v28M22 2v28M26 2v28" stroke="#777" />
        </Glyph>
        <Caret />
      </button>
      <button aria-label="Viewports" className="ml-3 flex items-center gap-1">
        <Glyph className={nav}>
          <path d="M2 3h28v26H2z" fill="#9db2ea" stroke="#444" strokeWidth={2} />
          <path d="M3 4h13v12H3z" fill="#7cc0f2" />
          <path d="M16 3v26M2 16h28" stroke="#33458a" strokeWidth={2} />
        </Glyph>
        <Caret />
      </button>
    </div>
  );
}

/* ---------- timeline ---------- */

const tl = "h-9 w-9";

const features: Record<string, ReactNode> = {
  sketch: (
    <Glyph className={tl}>
      <path d="M3 3h23M4 2v27M25 2v14M3 28h12M9 9h11M9 9v13c6 0 10-4 11-13" stroke="#666" strokeWidth={1.3} />
      <path d="M18 28l9-12 4 4-8 10-6 2z" fill="#f1b075" stroke="#d18a4c" />
    </Glyph>
  ),
  extrude: (
    <Glyph className={tl}>
      <path d="M3 27h17l5-4v4l-5 4H3z" fill="#b5b5b5" />
      <Block x={3} y={1} w={22} h={27} d={5} tone="blue" />
      <path d="M29 28V4" stroke="#333" />
      <path d="M29 1l2.500 5h-5z" fill="#222" />
    </Glyph>
  ),
  copy: (
    <Glyph className={tl}>
      <rect x={3} y={2} width={11} height={14} rx={3} fill="#e4e4e4" stroke="#555" strokeWidth={1.4} />
      <rect x={17} y={16} width={12} height={15} rx={3} fill="#d4d4d4" stroke="#555" strokeWidth={1.4} />
      <path d="M8 19v8h6M20 12l-3-3" stroke="#555" strokeWidth={1.5} strokeDasharray="2 1" />
    </Glyph>
  ),
  move: (
    <Glyph className={tl}>
      <MoveArrows />
    </Glyph>
  ),
  component: (
    <Glyph className={tl}>
      <rect x={3} y={2} width={13} height={13} rx={4} fill="#e4e4e4" stroke="#444" strokeWidth={1.5} />
      <path d="M5 20v7h6" stroke="#222" strokeWidth={2} />
      <path d="M14 27l-5-3.500v7z" fill="#222" />
      <path d="M17 18l3-3h11v12l-3 4H17z" fill="#4ea4e8" stroke="#2f7dbd" />
    </Glyph>
  ),
  fillet: (
    <Glyph className={tl}>
      <path d="M3 10c1-6 7-8 13-8 9 1 14 7 14 14v8l-6 7H3z" fill="#dadada" stroke="#555" />
      <path d="M15 2c9 1 14 7 14 13l-5 4c0-7-3-10-8-10z" fill="#3f97e4" />
      <path d="M10 3l10-2" stroke="#f0a35c" strokeWidth={2} />
    </Glyph>
  ),
};

const history = [
  "sketch", "sketch", "extrude", "copy", "move", "sketch", "extrude", "sketch",
  "component", "component", "component", "component", "component", "component", "component",
  "fillet", "fillet", "fillet",
];

const playback = [
  { name: "Go to start", d: "M3 4h3v24H3zM27 4v24L8 16z" },
  { name: "Step back", d: "M22 4v24L3 16zM25 12h3v8h-3z" },
  { name: "Play", d: "M5 1v30l24-15z" },
  { name: "Step forward", d: "M10 4v24l19-12zM4 12h3v8H4z" },
  { name: "Go to end", d: "M26 4h3v24h-3zM5 4v24l19-12z" },
];

function Timeline() {
  return (
    <footer className="flex h-[100px] shrink-0 items-start border-t-4 border-[#cfced8] bg-[#f0f0f0] pl-[17px] pr-[26px]">
      <div className="mt-8 flex gap-[18px]">
        {playback.map((step) => (
          <button key={step.name} aria-label={step.name}>
            <Glyph className="h-8 w-8">
              <path d={step.d} fill="#555" />
            </Glyph>
          </button>
        ))}
      </div>
      <ol className="ml-[34px] mt-7 flex">
        {history.map((feature, i) => (
          <li key={i} className="flex w-12 flex-col items-center">
            <button aria-label={feature}>{features[feature]}</button>
            <span className="mt-1 h-3 w-0.5 bg-[#b5b5b5]" />
            <span
              className={
                i === 0
                  ? "h-0.5 w-6 self-end bg-[#b5b5b5]"
                  : i === history.length - 1
                    ? "h-0.5 w-6 self-start bg-[#b5b5b5]"
                    : "h-0.5 w-full bg-[#b5b5b5]"
              }
            />
          </li>
        ))}
      </ol>
      <svg viewBox="0 0 24 68" className="-ml-3 mt-[18px] h-[68px] w-6 shrink-0" aria-label="Timeline marker">
        <path d="M0 0h24v11L14 22v46h-4V22L0 11z" fill="#555" />
      </svg>
      <button aria-label="Timeline settings" className="ml-auto mt-8 text-[#6a6a6a]">
        <Gear className="h-8 w-8" />
      </button>
    </footer>
  );
}

export default function App() {
  return (
    <div className="flex h-screen flex-col bg-[#fdfdfd] px-28 pb-[148px] pt-[76px]">
      <div className="flex min-h-0 flex-1 flex-col overflow-hidden rounded-[20px] shadow-[0_0_0_2px_#c4c4c4,0_20px_80px_16px_rgba(0,0,0,0.4)]">
        <TitleBar />
        <DocumentBar />
        <Ribbon />
        <main className="relative flex min-h-0 flex-1 justify-between overflow-hidden p-2">
          <ModelView />
          <aside className="relative flex flex-col">
            <div className={bar}>
              <button aria-label="Collapse browser" className="w-12 pl-2">
                <svg viewBox="0 0 20 14" className="h-3.5 w-5" aria-hidden="true">
                  <path d="M10 0L0 7l10 7zM20 0L10 7l10 7z" fill="#222" />
                </svg>
              </button>
              <h2 className="flex-1">BROWSER</h2>
              <button aria-label="Minimize browser" className="mr-[22px]">
                <DotIcon />
              </button>
            </div>
            <Tree />
            <div className={`${bar} mt-auto mb-0.5`}>
              <h2 className="flex-1 pl-12">COMMENTS</h2>
              <button aria-label="Expand comments" className="mr-[22px]">
                <DotIcon plus />
              </button>
            </div>
          </aside>
          <div className="relative flex flex-col items-end justify-between pt-[239px]">
            <CombineDialog />
            <p className="mb-0.5 flex items-center gap-[34px] pr-4 font-['Noto_Sans',sans-serif] text-[23px] font-bold text-[#ececf4]">
              6 Bodies
              <svg viewBox="0 0 34 34" className="h-[34px] w-[34px]" aria-hidden="true">
                <path d="M17 0a17 17 0 1 0 0 34h17V17A17 17 0 0 0 17 0z" fill="#000" />
                <path d="M6 19l13-8M10 23l15-11M18 20l8-5M18 24l8-5" stroke="#fff" strokeWidth={2} />
              </svg>
            </p>
          </div>
          <NavigationBar />
        </main>
        <Timeline />
      </div>
    </div>
  );
}
